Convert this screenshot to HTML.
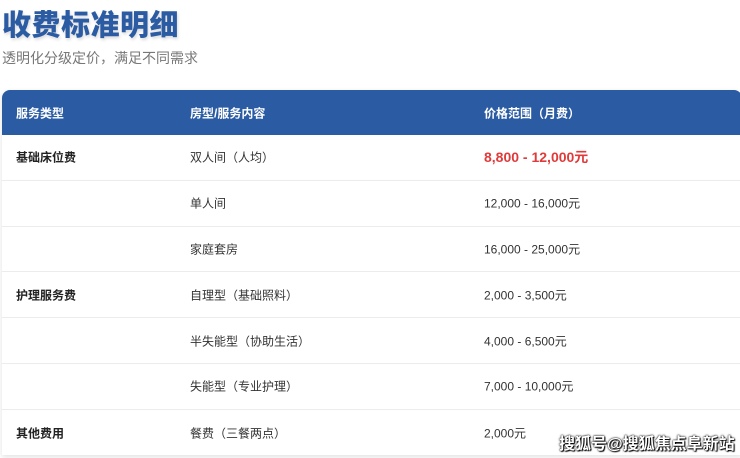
<!DOCTYPE html>
<html><head><meta charset="utf-8"><style>
*{margin:0;padding:0;box-sizing:border-box}
body{width:740px;height:458px;background:#fff;font-family:"Liberation Sans","Noto Sans CJK SC",sans-serif;position:relative;overflow:hidden}
h1{position:absolute;left:2px;top:2px;font-size:29px;font-weight:900;color:#2b5ba3;letter-spacing:0.5px;text-shadow:1px 2px 3px rgba(0,0,0,.15)}
.sub{position:absolute;left:2px;top:48px;font-size:14px;color:#777}
.tbl{position:absolute;left:2px;top:90px;width:740px;height:365px;border-radius:8px 8px 0 0;box-shadow:0 2px 6px rgba(0,0,0,.12);overflow:hidden;background:#fff}
.hd{height:45px;background:#2b5ba3;color:#fff;font-weight:bold;font-size:12px;position:relative}
.row{height:45.8px;border-bottom:1px solid #ececec;position:relative;font-size:12px;color:#333}
.c1,.c2,.c3{position:absolute;top:50%;transform:translateY(-50%)}
.c1{left:14px}.c2{left:188px}.c3{left:482px}
.row .c1{font-weight:bold;color:#222}
.red{color:#e03a3a;font-weight:bold;font-size:14px}
.wm{position:absolute;left:559px;top:430px;font-size:16px;font-weight:bold;color:#fff;text-shadow:0 0 2px #000,0 0 1px #000,1px 1px 1px #000}
</style></head><body>
<h1>收费标准明细</h1>
<div class="sub">透明化分级定价，满足不同需求</div>
<div class="tbl">
<div class="hd"><span class="c1">服务类型</span><span class="c2">房型/服务内容</span><span class="c3">价格范围（月费）</span></div>
<div class="row"><span class="c1">基础床位费</span><span class="c2">双人间（人均）</span><span class="c3 red">8,800 - 12,000元</span></div>
<div class="row"><span class="c2">单人间</span><span class="c3">12,000 - 16,000元</span></div>
<div class="row"><span class="c2">家庭套房</span><span class="c3">16,000 - 25,000元</span></div>
<div class="row"><span class="c1">护理服务费</span><span class="c2">自理型（基础照料）</span><span class="c3">2,000 - 3,500元</span></div>
<div class="row"><span class="c2">半失能型（协助生活）</span><span class="c3">4,000 - 6,500元</span></div>
<div class="row"><span class="c2">失能型（专业护理）</span><span class="c3">7,000 - 10,000元</span></div>
<div class="row" style="border-bottom:none"><span class="c1">其他费用</span><span class="c2">餐费（三餐两点）</span><span class="c3">2,000元</span></div>
</div>
<div class="wm">搜狐号@搜狐焦点阜新站</div>
</body></html>
